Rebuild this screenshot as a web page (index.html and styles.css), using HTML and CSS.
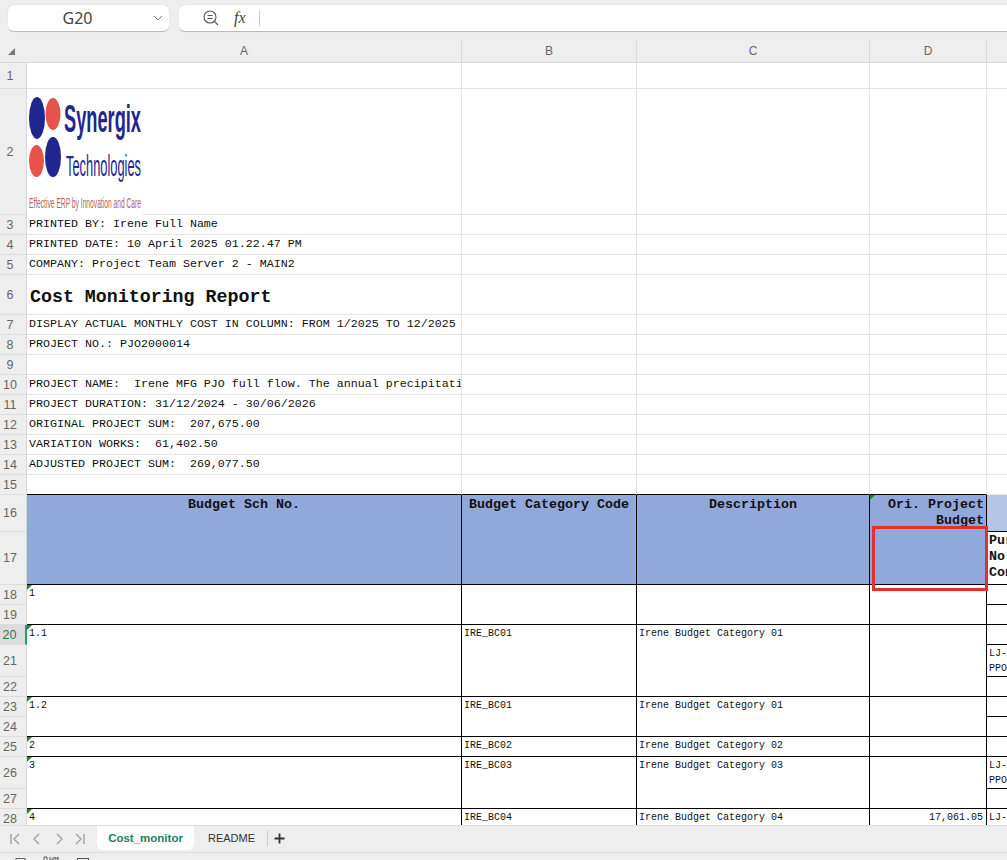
FILE: index.html
```html
<!DOCTYPE html>
<html lang="en">
<head>
    <meta charset="UTF-8">
    <meta name="viewport" content="width=device-width, initial-scale=1.0">
    <title>Cost Monitoring Report</title>
    <link rel="stylesheet" href="styles.css">
</head>
<body>
    <div class="formula-bar">
        <div class="name-box">
            <span class="name-text">G20</span>
            <svg class="chevron" width="10" height="6" viewBox="0 0 10 6"><path d="M1 1l4 4 4-4" fill="none" stroke="#777" stroke-width="1"/></svg>
        </div>
        <div class="formula-box">
            <svg class="zoom-icon" width="18" height="18" viewBox="0 0 18 18">
                <circle cx="8" cy="8" r="6" fill="none" stroke="#555" stroke-width="1.1"/>
                <path d="M5.5 6.5h5M5.5 9.5h5M12.5 12.5l3.5 3.5" fill="none" stroke="#555" stroke-width="1.1"/>
            </svg>
            <span class="fx">fx</span>
            <span class="formula-sep"></span>
        </div>
    </div>

    <div class="sheet">
        <div class="grid">
            <!-- column headers -->
            <div class="corner"><span class="corner-mark"></span></div>
            <div class="col-head">A</div>
            <div class="col-head">B</div>
            <div class="col-head">C</div>
            <div class="col-head">D</div>
            <div class="col-head last"></div>

            <!-- top of report -->
            <div class="row-head">1</div><div class="cell"></div><div class="cell"></div><div class="cell"></div><div class="cell"></div><div class="cell"></div>
            <div class="row-head">2</div>
            <div class="cell logo-cell">
                <svg class="logo" width="116" height="126" viewBox="0 0 116 126">
                    <rect width="116" height="126" fill="#fff"/>
                    <ellipse cx="10" cy="29" rx="8" ry="21" fill="#1f2690"/>
                    <ellipse cx="26" cy="25" rx="7.5" ry="16" fill="#e5534b"/>
                    <ellipse cx="9.500" cy="72" rx="7.5" ry="16" fill="#e5534b"/>
                    <ellipse cx="26" cy="68" rx="8" ry="20" fill="#1f2690"/>
                    <text x="37" y="43" font-size="38" font-weight="bold" fill="#1f2690" textLength="77" lengthAdjust="spacingAndGlyphs">Synergix</text>
                    <text x="39" y="87" font-size="30" fill="#1f2690" textLength="75" lengthAdjust="spacingAndGlyphs">Technologies</text>
                    <text x="2" y="119" font-size="14" fill="#b5655c" textLength="112" lengthAdjust="spacingAndGlyphs">Effective ERP by Innovation and Care</text>
                </svg>
            </div>
            <div class="cell"></div><div class="cell"></div><div class="cell"></div><div class="cell"></div>
            <div class="row-head">3</div><div class="cell info">PRINTED BY: Irene Full Name</div><div class="cell"></div><div class="cell"></div><div class="cell"></div><div class="cell"></div>
            <div class="row-head">4</div><div class="cell info">PRINTED DATE: 10 April 2025 01.22.47 PM</div><div class="cell"></div><div class="cell"></div><div class="cell"></div><div class="cell"></div>
            <div class="row-head">5</div><div class="cell info">COMPANY: Project Team Server 2 - MAIN2</div><div class="cell"></div><div class="cell"></div><div class="cell"></div><div class="cell"></div>
            <div class="row-head">6</div><div class="cell title">Cost Monitoring Report</div><div class="cell"></div><div class="cell"></div><div class="cell"></div><div class="cell"></div>
            <div class="row-head">7</div><div class="cell info">DISPLAY ACTUAL MONTHLY COST IN COLUMN: FROM 1/2025 TO 12/2025</div><div class="cell"></div><div class="cell"></div><div class="cell"></div><div class="cell"></div>
            <div class="row-head">8</div><div class="cell info">PROJECT NO.: PJO2000014</div><div class="cell"></div><div class="cell"></div><div class="cell"></div><div class="cell"></div>
            <div class="row-head">9</div><div class="cell"></div><div class="cell"></div><div class="cell"></div><div class="cell"></div><div class="cell"></div>
            <div class="row-head">10</div><div class="cell info">PROJECT NAME:  Irene MFG PJO full flow. The annual precipitati</div><div class="cell"></div><div class="cell"></div><div class="cell"></div><div class="cell"></div>
            <div class="row-head">11</div><div class="cell info">PROJECT DURATION: 31/12/2024 - 30/06/2026</div><div class="cell"></div><div class="cell"></div><div class="cell"></div><div class="cell"></div>
            <div class="row-head">12</div><div class="cell info">ORIGINAL PROJECT SUM:  207,675.00</div><div class="cell"></div><div class="cell"></div><div class="cell"></div><div class="cell"></div>
            <div class="row-head">13</div><div class="cell info">VARIATION WORKS:  61,402.50</div><div class="cell"></div><div class="cell"></div><div class="cell"></div><div class="cell"></div>
            <div class="row-head">14</div><div class="cell info">ADJUSTED PROJECT SUM:  269,077.50</div><div class="cell"></div><div class="cell"></div><div class="cell"></div><div class="cell"></div>
            <div class="row-head">15</div><div class="cell under"></div><div class="cell under"></div><div class="cell under"></div><div class="cell under"></div><div class="cell"></div>

            <!-- table header -->
            <div class="row-head">16</div>
            <div class="th span2">Budget Sch No.</div>
            <div class="th span2">Budget Category Code</div>
            <div class="th span2">Description</div>
            <div class="th span2 th-right flagged">Ori. Project Budget</div>
            <div class="th-pale"></div>
            <div class="row-head">17</div>
            <div class="td td-head">Pur<br>No.<br>Con</div>

            <!-- table body -->
            <div class="row-head">18</div>
            <div class="td span2 flagged">1</div><div class="td span2"></div><div class="td span2"></div><div class="td span2"></div>
            <div class="td"></div>
            <div class="row-head">19</div><div class="td"></div>

            <div class="row-head active">20</div>
            <div class="td span3 flagged">1.1</div><div class="td span3">IRE_BC01</div><div class="td span3">Irene Budget Category 01</div><div class="td span3"></div>
            <div class="td"></div>
            <div class="row-head">21</div><div class="td">LJ-<br>PPO</div>
            <div class="row-head">22</div><div class="td"></div>

            <div class="row-head">23</div>
            <div class="td span2 flagged">1.2</div><div class="td span2">IRE_BC01</div><div class="td span2">Irene Budget Category 01</div><div class="td span2"></div>
            <div class="td"></div>
            <div class="row-head">24</div><div class="td"></div>

            <div class="row-head">25</div>
            <div class="td flagged">2</div><div class="td">IRE_BC02</div><div class="td">Irene Budget Category 02</div><div class="td"></div><div class="td"></div>

            <div class="row-head">26</div>
            <div class="td span2 flagged">3</div><div class="td span2">IRE_BC03</div><div class="td span2">Irene Budget Category 03</div><div class="td span2"></div>
            <div class="td">LJ-<br>PPO</div>
            <div class="row-head">27</div><div class="td"></div>

            <div class="row-head">28</div>
            <div class="td flagged">4</div><div class="td">IRE_BC04</div><div class="td">Irene Budget Category 04</div><div class="td td-num">17,061.05</div><div class="td">LJ-</div>
        </div>
        <div class="red-box"></div>
    </div>

    <div class="tab-bar">
        <svg class="tab-nav" width="97" height="26" viewBox="0 0 97 26">
            <path d="M11 8v10M19 8l-5 5 5 5M39 8l-5 5 5 5M57 8l5 5-5 5M76 8l5 5-5 5M84 8v10" fill="none" stroke="#a0a0a0" stroke-width="1.4"/>
        </svg>
        <div class="tab tab-active">Cost_monitor</div>
        <div class="tab">README</div>
        <span class="tab-sep"></span>
        <svg class="tab-add" width="11" height="11" viewBox="0 0 11 11"><path d="M5.5 0.5v10M0.5 5.5h10" stroke="#333" stroke-width="1.8"/></svg>
    </div>

    <div class="status-bar">
        <svg width="100" height="8" viewBox="0 0 100 8">
            <rect x="16" y="5.5" width="9" height="8" fill="none" stroke="#666"/>
            <rect x="13.5" y="7.5" width="9" height="8" fill="#eee" stroke="#666"/>
            <path d="M44 4V7M47 4V7M44 4h3M50 4V7h3V4M55 7V4l1.5 2 1.500-2V7" fill="none" stroke="#555"/>
            <rect x="77.500" y="5.500" width="11" height="8" fill="none" stroke="#555"/>
        </svg>
    </div>
</body>
</html>
```

FILE: styles.css
```css
* {
    box-sizing: border-box;
}
html, body {
    height: 100%;
}
body {
    margin: 0;
    display: flex;
    flex-direction: column;
    height: 860px;
    overflow: hidden;
    background-color: #eeeeee;
    font-family: "Liberation Sans", Arial, sans-serif;
    color: #333;
}

/* formula bar */
.formula-bar {
    flex: 0 0 40px;
    display: flex;
    gap: 10px;
    padding: 5px 0 0 8px;
    overflow: hidden;
}
.name-box, .formula-box {
    height: 27px;
    background: white;
    border-radius: 6px;
    border-bottom: 1px solid #bbb;
    box-shadow: 0 0 1px #ccc;
    display: flex;
    align-items: center;
}
.name-box {
    flex: 0 0 161px;
    position: relative;
    justify-content: center;
    padding-right: 22px;
}
.name-text {
    font-family: "Noto Sans", sans-serif;
    font-size: 16px;
    color: #444;
}
.chevron {
    position: absolute;
    right: 6px;
    top: 10px;
}
.formula-box {
    flex: 0 0 900px;
    padding-left: 23px;
}
.fx {
    font-family: "Liberation Serif", serif;
    font-style: italic;
    font-size: 16px;
    color: #444;
    margin-left: 14px;
}
.formula-sep {
    width: 1px;
    height: 16px;
    background: #ccc;
    margin-left: 13px;
}

/* sheet */
.sheet {
    flex: 0 0 785px;
    position: relative;
    overflow: hidden;
    background: white;
}
.grid {
    display: grid;
    grid-template-columns: 27px 435px 175px 233px 117px 60px;
    grid-template-rows:
        23px 26px 126px 20px 20px 20px 40px
        20px 20px 20px 20px 20px 20px 20px 20px 20px
        37px 53px 20px 20px 20px 32px 20px 20px 20px 20px 32px 20px 20px;
    font-family: "Liberation Mono", "Courier New", monospace;
    font-size: 11.67px;
    color: #111;
}
.corner, .col-head, .row-head {
    background: #eeeeee;
    font-family: "Liberation Sans", Arial, sans-serif;
    color: #666;
}
.corner {
    border-right: 1px solid #eeeeee;
    border-bottom: 1px solid #d8d8d8;
    padding: 8px 0 0 8px;
}
.corner-mark {
    display: block;
    width: 0;
    height: 0;
    border-left: 7px solid transparent;
    border-bottom: 7px solid #777;
}
.col-head {
    display: flex;
    align-items: center;
    justify-content: center;
    font-size: 12px;
    border-right: 1px solid #dadada;
    border-bottom: 1px solid #d8d8d8;
}
.col-head.last {
    border-right: none;
}
.row-head {
    display: flex;
    align-items: center;
    justify-content: center;
    padding-right: 6px;
    font-size: 12.5px;
    border-right: 1px solid #d8d8d8;
    border-bottom: 1px solid #dcdcdc;
}
.row-head.active {
    background: #dcdcdc;
    color: #1f7a5b;
    border-right: 2px solid #21a366;
}
.cell {
    border-right: 1px solid #e3e3e3;
    border-bottom: 1px solid #e3e3e3;
    overflow: hidden;
}
.cell.under {
    border-bottom-color: #000;
}
.info {
    padding: 2px 0 0 2px;
    line-height: 15px;
    white-space: pre;
}
.title {
    padding: 13px 0 0 3px;
    font-size: 18.3px;
    line-height: 18px;
    font-weight: bold;
    white-space: pre;
}
.logo-cell {
    overflow: visible;
}
.logo {
    display: block;
    font-family: "Liberation Sans", Arial, sans-serif;
}

/* report table */
.th, .th-pale, .td {
    border-right: 1px solid #000;
    border-bottom: 1px solid #000;
}
.th {
    position: relative;
    padding: 2px 2px 0;
    background: #91a9da;
    font-size: 13.33px;
    font-weight: bold;
    line-height: 16px;
    text-align: center;
}
.th-right {
    text-align: right;
}
.th-pale {
    background: #b4c6e7;
    border-right: none;
}
.td {
    position: relative;
    padding: 1px 0 0 2px;
    font-size: 10px;
    line-height: 15px;
    white-space: nowrap;
    overflow: hidden;
}
.td-head {
    font-size: 13.33px;
    font-weight: bold;
    line-height: 16px;
}
.td-num {
    text-align: right;
    padding-right: 3px;
}
.span2 {
    grid-row: span 2;
}
.span3 {
    grid-row: span 3;
}
.flagged::before {
    content: "";
    position: absolute;
    left: 0;
    top: 0;
    border-top: 5px solid #1e8a1e;
    border-right: 5px solid transparent;
}
.red-box {
    position: absolute;
    left: 872px;
    top: 486px;
    width: 116px;
    height: 65px;
    border: 3px solid #e03030;
}

/* sheet tabs */
.tab-bar {
    flex: 0 0 27px;
    display: flex;
    align-items: flex-start;
    border-top: 1px solid #dddddd;
    border-bottom: 1px solid #dddddd;
}
.tab-nav {
    flex: none;
}
.tab {
    height: 24px;
    display: flex;
    align-items: center;
    font-size: 11px;
    color: #333;
    padding: 0 12px 0 14px;
}
.tab-active {
    width: 97px;
    justify-content: center;
    padding: 0;
    background: white;
    border-radius: 0 0 6px 6px;
    color: #1e7e5e;
    font-size: 11.5px;
    font-weight: bold;
}
.tab-sep {
    width: 1px;
    height: 16px;
    margin: 4px 0 0 0;
    background: #cfcfcf;
}
.tab-add {
    margin: 7px 0 0 6px;
}

/* status bar */
.status-bar {
    flex: 0 0 8px;
    overflow: hidden;
}
.status-bar svg {
    display: block;
}
```
